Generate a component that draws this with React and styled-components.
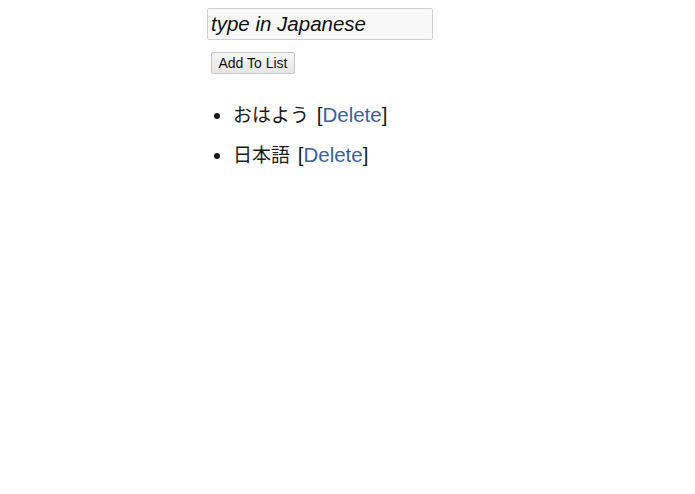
import React, { useState } from 'react';
import styled, { createGlobalStyle } from 'styled-components';

const GlobalStyle = createGlobalStyle`
  body {
    margin: 0;
    background: #fff;
    font-family: 'Liberation Sans', Arial, 'Noto Sans CJK JP', sans-serif;
    color: #1a1a1a;
  }
`;

const Wrapper = styled.div`
  padding: 8px 0 0 207px;
`;

const Input = styled.input`
  display: block;
  box-sizing: border-box;
  width: 226px;
  height: 32px;
  padding: 0 3px;
  font-family: 'Liberation Sans', Arial, 'Noto Sans CJK JP', sans-serif;
  font-size: 20.5px;
  font-style: italic;
  color: #111;
  background: #f8f8f8;
  border: 1px solid #cfcfcf;
  border-radius: 2px;
  outline: none;
  &::placeholder {
    color: #111;
  }
`;

const Button = styled.button`
  display: block;
  box-sizing: border-box;
  margin: 12px 0 0 4px;
  height: 22px;
  width: 84px;
  padding: 0;
  font-family: 'Liberation Sans', Arial, sans-serif;
  font-size: 14px;
  color: #111;
  background: linear-gradient(#f6f6f6, #e6e6e6);
  border: 1px solid #c6c6c6;
  border-radius: 2px;
`;

const List = styled.ul`
  margin: 29px 0 0;
  padding-left: 26px;
`;

const Item = styled.li`
  font-size: 20.5px;
  line-height: 24px;
  margin-bottom: 16px;
  font-family: 'Liberation Sans', Arial, 'Noto Sans CJK JP', sans-serif;
`;

const Word = styled.span`
  font-family: 'Noto Sans CJK JP', sans-serif;
  font-size: 19px;
  line-height: 1;
  margin-right: 2px;
`;

const DeleteLink = styled.a`
  color: #3b5ea4;
  text-decoration: none;
  cursor: pointer;
`;

const App = () => {
  const [items, setItems] = useState(['おはよう', '日本語']);
  const [text, setText] = useState('');

  return (
    <Wrapper>
      <GlobalStyle />
      <Input
        placeholder='type in Japanese'
        value={text}
        onChange={(e) => setText(e.target.value)}
      />
      <Button
        onClick={() => {
          if (text) {
            setItems([...items, text]);
            setText('');
          }
        }}
      >
        Add To List
      </Button>
      <List>
        {items.map((item, i) => (
          <Item key={i}>
            <Word>{item}</Word> [
            <DeleteLink onClick={() => setItems(items.filter((_, j) => j !== i))}>
              Delete
            </DeleteLink>
            ]
          </Item>
        ))}
      </List>
    </Wrapper>
  );
};

export default App;
